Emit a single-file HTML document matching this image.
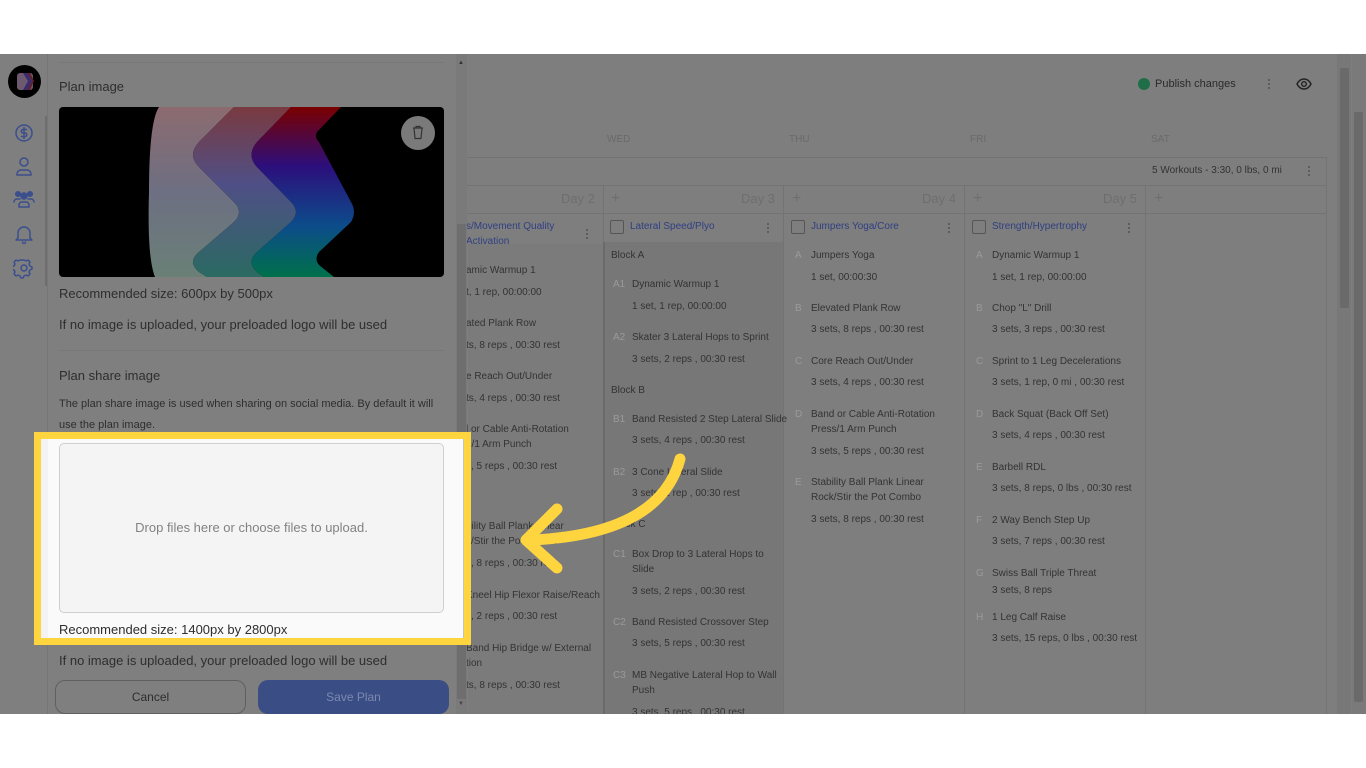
<!DOCTYPE html>
<html><head><meta charset="utf-8"><style>
*{margin:0;padding:0;box-sizing:border-box}
body{width:1366px;height:768px;background:#fff;position:relative;overflow:hidden;font-family:"Liberation Sans",sans-serif}
.a{position:absolute}
#main{position:absolute;left:0;top:54px;width:1366px;height:660px;background:#7e7e7e;overflow:hidden}
.t{position:absolute;font-size:10px;line-height:12px;color:#333;white-space:nowrap}
.l{position:absolute;font-size:10px;line-height:12px;color:#9a9a9a}
.ti{color:#2f3f82}
.p{position:absolute;font-size:13px;line-height:16px;color:#2e2e2e;white-space:nowrap}
.vl{position:absolute;width:1px;background:#737373}
.hl{position:absolute;height:1px;background:#737373}
.dots{position:absolute;width:2px;height:12px;background:radial-gradient(circle,#555 0.9px,transparent 1.1px) 0 0/2px 4px}
.cb{position:absolute;width:14px;height:14px;border:1px solid #555;border-radius:2px}
.day{position:absolute;font-size:13px;color:#6e6e6e}
.plus{position:absolute;font-size:16px;color:#6e6e6e;line-height:16px}
</style></head><body>
<div id="main">
<!-- top bar -->
<div class="a" style="left:1138px;top:24px;width:12px;height:12px;border-radius:50%;background:#1f6e48"></div>
<div class="p" style="left:1155px;top:22px;font-size:11px;color:#2a2a2a">Publish changes</div>
<div class="dots" style="left:1268px;top:24px"></div>
<svg class="a" style="left:1296px;top:24px" width="16" height="12" viewBox="0 0 16 12"><path d="M1 6C3 2 6 1 8 1s5 1 7 5c-2 4-5 5-7 5S3 10 1 6z" fill="none" stroke="#222" stroke-width="1.4"/><circle cx="8" cy="6" r="2.3" fill="none" stroke="#222" stroke-width="1.4"/></svg>
<!-- weekday labels -->
<div class="day" style="left:607px;top:80px;font-size:10px;color:#6a6a6a">WED</div>
<div class="day" style="left:789px;top:80px;font-size:10px;color:#6a6a6a">THU</div>
<div class="day" style="left:970px;top:80px;font-size:10px;color:#6a6a6a">FRI</div>
<div class="day" style="left:1151px;top:80px;font-size:10px;color:#6a6a6a">SAT</div>
<!-- grid -->
<div class="hl" style="left:460px;top:103px;width:866px"></div>
<div class="hl" style="left:460px;top:131px;width:866px"></div>
<div class="hl" style="left:460px;top:159px;width:866px"></div>
<div class="vl" style="left:1326px;top:103px;height:557px"></div>
<div class="t" style="left:1152px;top:111px;color:#333">5 Workouts - 3:30, 0 lbs, 0 mi</div>
<div class="dots" style="left:1308px;top:111px"></div>
<div class="vl" style="left:603px;top:131px;height:529px"></div>
<div class="vl" style="left:783px;top:131px;height:529px"></div>
<div class="vl" style="left:964px;top:131px;height:529px"></div>
<div class="vl" style="left:1145px;top:131px;height:529px"></div>
<div class="a" style="left:468px;top:190px;width:135px;height:470px;background:#7b7b7b"></div>
<div class="a" style="left:603px;top:188px;width:180px;height:472px;background:#777"></div>
<div class="a" style="left:603px;top:188px;width:2px;height:472px;background:#6a6a6a"></div>
<div class="day" style="left:561px;top:137px">Day 2</div>
<div class="plus" style="left:611px;top:137px">+</div><div class="day" style="left:741px;top:137px">Day 3</div>
<div class="plus" style="left:792px;top:137px">+</div><div class="day" style="left:922px;top:137px">Day 4</div>
<div class="plus" style="left:973px;top:137px">+</div><div class="day" style="left:1103px;top:137px">Day 5</div>
<div class="plus" style="left:1154px;top:137px">+</div>
<!-- day2 -->
<div class="t ti" style="left:466px;top:167px">s/Movement Quality</div>
<div class="t ti" style="left:466px;top:182px">Activation</div>
<div class="dots" style="left:586px;top:174px"></div>
<div class="t" style="left:466px;top:211px">amic Warmup 1</div>
<div class="t" style="left:466px;top:233px">t, 1 rep, 00:00:00</div>
<div class="t" style="left:466px;top:264px">ated Plank Row</div>
<div class="t" style="left:466px;top:286px">ts, 8 reps , 00:30 rest</div>
<div class="t" style="left:466px;top:317px">e Reach Out/Under</div>
<div class="t" style="left:466px;top:339px">ts, 4 reps , 00:30 rest</div>
<div class="t" style="left:466px;top:370px">l or Cable Anti-Rotation</div>
<div class="t" style="left:466px;top:385px">n/1 Arm Punch</div>
<div class="t" style="left:466px;top:407px">s, 5 reps , 00:30 rest</div>
<div class="t" style="left:466px;top:467px">bility Ball Plank Linear</div>
<div class="t" style="left:466px;top:482px">k/Stir the Pot Combo</div>
<div class="t" style="left:466px;top:504px">s, 8 reps , 00:30 rest</div>
<div class="t" style="left:466px;top:536px">Kneel Hip Flexor Raise/Reach</div>
<div class="t" style="left:466px;top:557px">s, 2 reps , 00:30 rest</div>
<div class="t" style="left:466px;top:589px">Band Hip Bridge w/ External</div>
<div class="t" style="left:466px;top:604px">tion</div>
<div class="t" style="left:466px;top:626px">ts, 8 reps , 00:30 rest</div>
<!-- day3 -->
<div class="cb" style="left:610px;top:166px"></div>
<div class="t ti" style="left:630px;top:167px">Lateral Speed/Plyo</div>
<div class="dots" style="left:767px;top:168px"></div>
<div class="t" style="left:611px;top:196px">Block A</div>
<div class="l" style="left:613px;top:225px">A1</div><div class="t" style="left:632px;top:225px">Dynamic Warmup 1</div>
<div class="t" style="left:632px;top:247px">1 set, 1 rep, 00:00:00</div>
<div class="l" style="left:613px;top:278px">A2</div><div class="t" style="left:632px;top:278px">Skater 3 Lateral Hops to Sprint</div>
<div class="t" style="left:632px;top:300px">3 sets, 2 reps , 00:30 rest</div>
<div class="t" style="left:611px;top:331px">Block B</div>
<div class="l" style="left:613px;top:360px">B1</div><div class="t" style="left:632px;top:360px">Band Resisted 2 Step Lateral Slide</div>
<div class="t" style="left:632px;top:381px">3 sets, 4 reps , 00:30 rest</div>
<div class="l" style="left:613px;top:413px">B2</div><div class="t" style="left:632px;top:413px">3 Cone Lateral Slide</div>
<div class="t" style="left:632px;top:434px">3 sets, 1 rep , 00:30 rest</div>
<div class="t" style="left:611px;top:465px">Block C</div>
<div class="l" style="left:613px;top:495px">C1</div><div class="t" style="left:632px;top:495px">Box Drop to 3 Lateral Hops to</div>
<div class="t" style="left:632px;top:510px">Slide</div>
<div class="t" style="left:632px;top:532px">3 sets, 2 reps , 00:30 rest</div>
<div class="l" style="left:613px;top:563px">C2</div><div class="t" style="left:632px;top:563px">Band Resisted Crossover Step</div>
<div class="t" style="left:632px;top:584px">3 sets, 5 reps , 00:30 rest</div>
<div class="l" style="left:613px;top:616px">C3</div><div class="t" style="left:632px;top:616px">MB Negative Lateral Hop to Wall</div>
<div class="t" style="left:632px;top:631px">Push</div>
<div class="t" style="left:632px;top:653px">3 sets, 5 reps , 00:30 rest</div>
<!-- day4 -->
<div class="cb" style="left:791px;top:166px"></div>
<div class="t ti" style="left:811px;top:167px">Jumpers Yoga/Core</div>
<div class="dots" style="left:948px;top:168px"></div>
<div class="l" style="left:795px;top:196px">A</div><div class="t" style="left:811px;top:196px">Jumpers Yoga</div>
<div class="t" style="left:811px;top:218px">1 set, 00:00:30</div>
<div class="l" style="left:795px;top:249px">B</div><div class="t" style="left:811px;top:249px">Elevated Plank Row</div>
<div class="t" style="left:811px;top:270px">3 sets, 8 reps , 00:30 rest</div>
<div class="l" style="left:795px;top:302px">C</div><div class="t" style="left:811px;top:302px">Core Reach Out/Under</div>
<div class="t" style="left:811px;top:323px">3 sets, 4 reps , 00:30 rest</div>
<div class="l" style="left:795px;top:355px">D</div><div class="t" style="left:811px;top:355px">Band or Cable Anti-Rotation</div>
<div class="t" style="left:811px;top:370px">Press/1 Arm Punch</div>
<div class="t" style="left:811px;top:392px">3 sets, 5 reps , 00:30 rest</div>
<div class="l" style="left:795px;top:423px">E</div><div class="t" style="left:811px;top:423px">Stability Ball Plank Linear</div>
<div class="t" style="left:811px;top:438px">Rock/Stir the Pot Combo</div>
<div class="t" style="left:811px;top:460px">3 sets, 8 reps , 00:30 rest</div>
<!-- day5 -->
<div class="cb" style="left:972px;top:166px"></div>
<div class="t ti" style="left:992px;top:167px">Strength/Hypertrophy</div>
<div class="dots" style="left:1128px;top:168px"></div>
<div class="l" style="left:976px;top:196px">A</div><div class="t" style="left:992px;top:196px">Dynamic Warmup 1</div>
<div class="t" style="left:992px;top:218px">1 set, 1 rep, 00:00:00</div>
<div class="l" style="left:976px;top:249px">B</div><div class="t" style="left:992px;top:249px">Chop "L" Drill</div>
<div class="t" style="left:992px;top:270px">3 sets, 3 reps , 00:30 rest</div>
<div class="l" style="left:976px;top:302px">C</div><div class="t" style="left:992px;top:302px">Sprint to 1 Leg Decelerations</div>
<div class="t" style="left:992px;top:323px">3 sets, 1 rep, 0 mi , 00:30 rest</div>
<div class="l" style="left:976px;top:355px">D</div><div class="t" style="left:992px;top:355px">Back Squat (Back Off Set)</div>
<div class="t" style="left:992px;top:376px">3 sets, 4 reps , 00:30 rest</div>
<div class="l" style="left:976px;top:408px">E</div><div class="t" style="left:992px;top:408px">Barbell RDL</div>
<div class="t" style="left:992px;top:429px">3 sets, 8 reps, 0 lbs , 00:30 rest</div>
<div class="l" style="left:976px;top:461px">F</div><div class="t" style="left:992px;top:461px">2 Way Bench Step Up</div>
<div class="t" style="left:992px;top:482px">3 sets, 7 reps , 00:30 rest</div>
<div class="l" style="left:976px;top:514px">G</div><div class="t" style="left:992px;top:514px">Swiss Ball Triple Threat</div>
<div class="t" style="left:992px;top:531px">3 sets, 8 reps</div>
<div class="l" style="left:976px;top:558px">H</div><div class="t" style="left:992px;top:558px">1 Leg Calf Raise</div>
<div class="t" style="left:992px;top:579px">3 sets, 15 reps, 0 lbs , 00:30 rest</div>
<!-- right scrollbars -->
<div class="a" style="left:1337px;top:0;width:14px;height:660px;background:#787878"></div>
<div class="a" style="left:1340px;top:14px;width:9px;height:240px;background:#6a6a6a;border-radius:2px"></div>
<div class="a" style="left:1352px;top:0;width:14px;height:660px;background:#7a7a7a"></div>
<div class="a" style="left:1354px;top:58px;width:9px;height:590px;background:#6a6a6a;border-radius:2px"></div>

<!-- left sidebar -->
<div class="a" style="left:0;top:0;width:48px;height:660px;background:#7f7f7f;border-right:1px solid #767676"></div>
<div class="a" style="left:45px;top:62px;width:2px;height:170px;background:#6e6e6e"></div>
<svg class="a" style="left:8px;top:11px" width="33" height="33" viewBox="0 0 33 33"><circle cx="16.5" cy="16.5" r="16.5" fill="#000"/><rect x="9" y="8" width="16" height="17" rx="3" fill="#6e5a6e"/><path d="M15 8l5 8-5 9h4l5-9-5-8z" fill="#3a2a70"/><path d="M19 8l5 8-5 9h3l4-9-4-8z" fill="#602030"/></svg>
<g></g>
<svg class="a" style="left:13px;top:69px" width="22" height="220" viewBox="0 0 22 220" fill="none" stroke="#3b4f8e" stroke-width="1.5" stroke-linecap="round" stroke-linejoin="round">
<circle cx="11" cy="10" r="8"/><path d="M13.5 6.5h-3.5a1.7 1.7 0 0 0 0 3.5h2a1.7 1.7 0 0 1 0 3.5h-3.5M11 4.5v11"/>
<circle cx="11" cy="39" r="4"/><path d="M4 52v-1a4 4 0 0 1 4-4h6a4 4 0 0 1 4 4v1z"/>
<circle cx="11" cy="73" r="3" fill="#3b4f8e"/><circle cx="5" cy="71" r="2.3" fill="#3b4f8e"/><circle cx="17" cy="71" r="2.3" fill="#3b4f8e"/><path d="M6 84v-2a3 3 0 0 1 3-3h4a3 3 0 0 1 3 3v2z"/><path d="M1 79a3 3 0 0 1 3-3h3M21 79a3 3 0 0 0-3-3h-3"/>
<path d="M5 115v-5a6 6 0 0 1 12 0v5l2 2H3z M9.5 119a1.5 1.5 0 0 0 3 0"/>
<circle cx="11" cy="145" r="3"/><path d="M11 137l2 1 2-1 2 2-1 2 1 2 2 1v2l-2 1-1 2 1 2-2 2-2-1-2 1-1 2h-2l-1-2-2-1-2 1-2-2 1-2-1-2-2-1v-2l2-1 1-2-1-2 2-2 2 1 2-1z"/>
</svg>

<!-- panel -->
<div class="a" style="left:48px;top:0;width:408px;height:660px;background:#7f7f7f"></div>
<div class="hl" style="left:59px;top:8px;width:385px;background:#777"></div>
<div class="p" style="left:59px;top:25px">Plan image</div>
<svg class="a" style="left:59px;top:53px" width="385" height="170" viewBox="0 0 385 170">
<defs>
<linearGradient id="g1" x1="0" y1="0" x2="0" y2="1"><stop offset="0" stop-color="#8c6b70"/><stop offset=".5" stop-color="#6d6f82"/><stop offset="1" stop-color="#6a8077"/></linearGradient>
<linearGradient id="g2" x1="0" y1="0" x2="0" y2="1"><stop offset="0" stop-color="#7a3a40"/><stop offset=".45" stop-color="#4f4f86"/><stop offset="1" stop-color="#2b6a62"/></linearGradient>
<linearGradient id="g3" x1="0" y1="0" x2="0" y2="1"><stop offset="0" stop-color="#7a0000"/><stop offset=".35" stop-color="#2c0f7c"/><stop offset=".7" stop-color="#0c4c8a"/><stop offset="1" stop-color="#00704a"/></linearGradient>
<clipPath id="cp"><rect width="385" height="170" rx="4"/></clipPath>
</defs>
<g clip-path="url(#cp)">
<rect width="385" height="170" fill="#000"/>
<path d="M100 0H175L140 35Q128 48 140 60L175 95Q185 105 175 115L140 145Q128 155 140 165L148 170H96Q88 150 90 85Q90 15 100 0z" fill="url(#g1)"/>
<path d="M175 0H232L198 35Q187 48 198 60L232 95Q242 105 232 115L198 145Q187 155 198 165L205 170H148L140 165Q128 155 140 145L175 115Q185 105 175 95L140 60Q128 48 140 35z" fill="url(#g2)"/>
<path d="M232 0H282L258 25Q255 30 260 35L292 95Q298 105 292 115L260 145Q255 152 260 158L275 170H205L198 165Q187 155 198 145L232 115Q242 105 232 95L198 60Q187 48 198 35z" fill="url(#g3)"/>
</g>
</svg>
<div class="a" style="left:401px;top:62px;width:34px;height:34px;border-radius:50%;background:#7a7a7a"></div>
<svg class="a" style="left:411px;top:71px" width="14" height="15" viewBox="0 0 14 15" fill="none" stroke="#333" stroke-width="1.2"><path d="M2 3h10M5 3V1.5h4V3M3 3l1 10.5h6L11 3"/></svg>
<div class="p" style="left:59px;top:232px">Recommended size: 600px by 500px</div>
<div class="p" style="left:59px;top:263px">If no image is uploaded, your preloaded logo will be used</div>
<div class="hl" style="left:59px;top:296px;width:385px;background:#777"></div>
<div class="p" style="left:59px;top:314px">Plan share image</div>
<div class="p" style="left:59px;top:342px;font-size:11px">The plan share image is used when sharing on social media. By default it will</div>
<div class="p" style="left:59px;top:363px;font-size:11px">use the plan image.</div>
<div class="p" style="left:59px;top:599px">If no image is uploaded, your preloaded logo will be used</div>
<div class="a" style="left:55px;top:626px;width:191px;height:34px;border:1px solid #606060;border-radius:10px;font-size:12px;color:#2e2e2e;text-align:center;line-height:32px">Cancel</div>
<div class="a" style="left:258px;top:626px;width:191px;height:34px;background:#3a4d84;border-radius:10px;font-size:12px;color:#7c8ab0;text-align:center;line-height:34px">Save Plan</div>
<!-- panel scrollbar -->
<div class="a" style="left:456px;top:0;width:11px;height:660px;background:#7a7a7a"></div>
<div class="a" style="left:457px;top:170px;width:9px;height:475px;background:#6e6e6e"></div>
<div class="a" style="left:458px;top:6px;font-size:6px;color:#333">▲</div>
<div class="a" style="left:458px;top:647px;font-size:6px;color:#444">▼</div>

<!-- highlight -->
<div class="a" style="left:34px;top:378px;width:437px;height:213px;border:7px solid #fed43f;background:#fafafa;overflow:hidden">
<div class="a" style="left:422px;top:0;width:7px;height:200px;background:#c2c2c2"></div>
<div class="a" style="left:0;top:0;width:7px;height:200px;background:#f3f3f3"></div>
<div class="a" style="left:18px;top:4px;width:385px;height:170px;background:#f4f4f4;border:1px solid #cfcfcf;border-radius:5px;text-align:center;line-height:168px;font-size:13px;color:#828282">Drop files here or choose files to upload.</div>
<div class="p" style="left:18px;top:183px">Recommended size: 1400px by 2800px</div>
</div>
<!-- arrow -->
<svg class="a" style="left:0;top:0" width="1366" height="660" fill="none" stroke="#fed43f" stroke-width="11" stroke-linecap="round" stroke-linejoin="round"><path d="M680 405Q660 480 532 486"/><path d="M557 455L526 486L557 514"/></svg>
</div>
</body></html>
